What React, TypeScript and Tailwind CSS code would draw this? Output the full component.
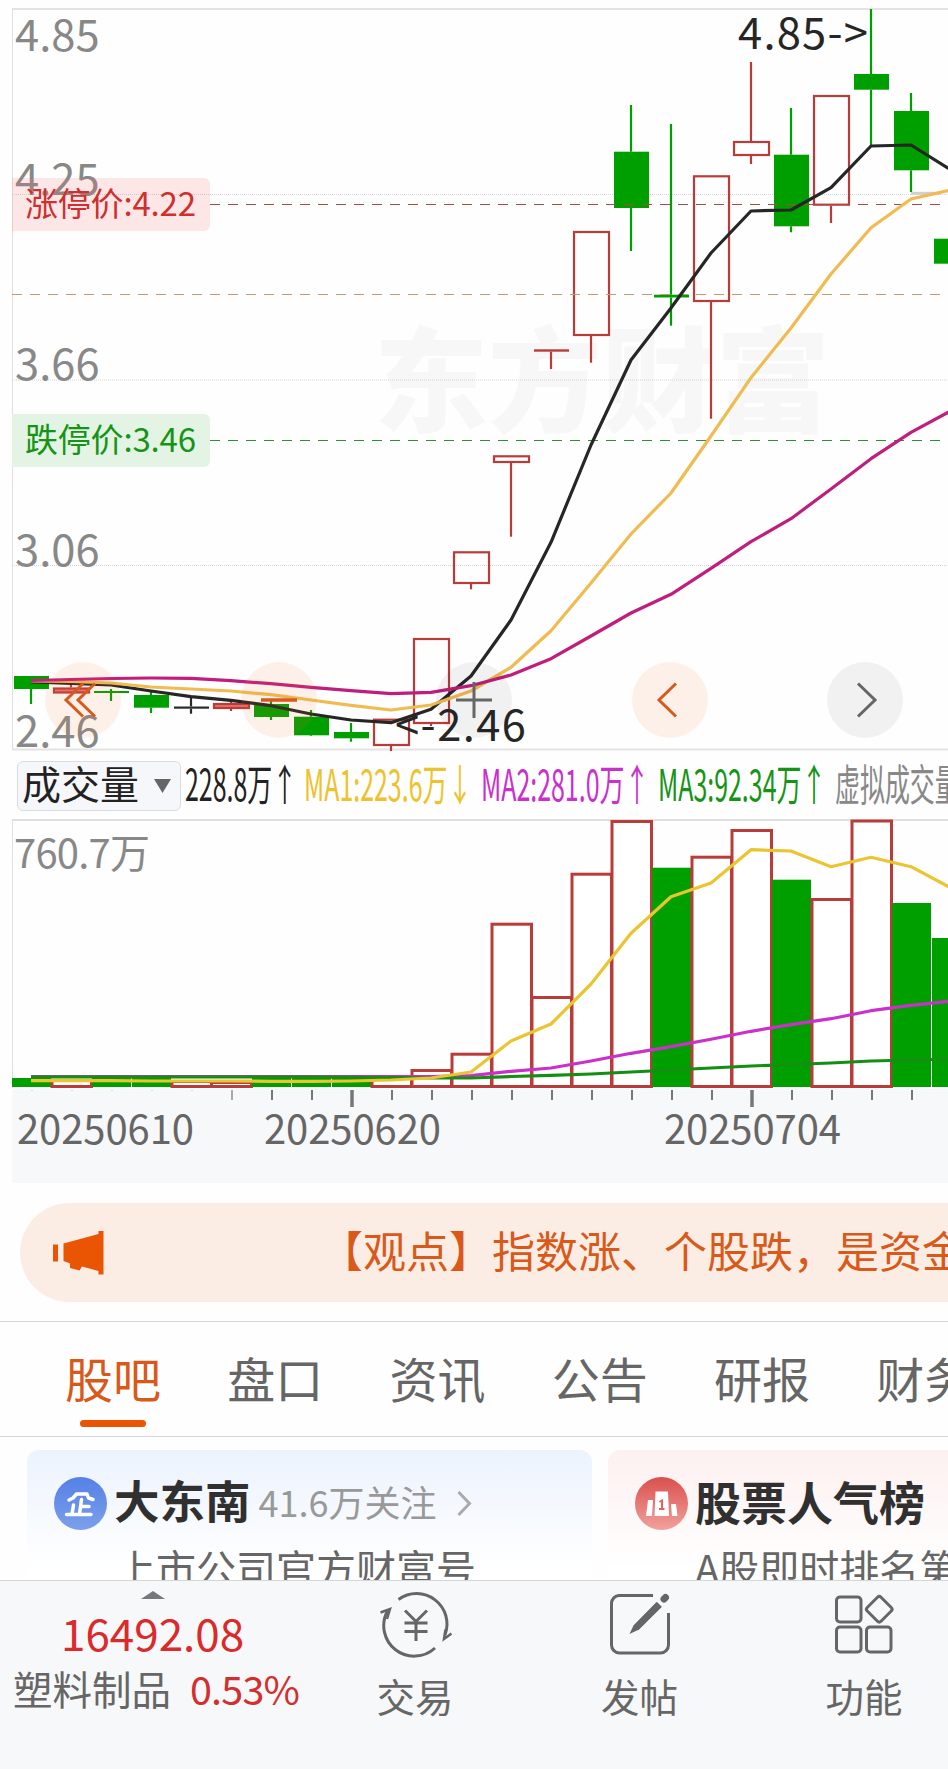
import type { ReactNode } from "react"

const RED = "#b93c3a"
const GREEN = "#009f00"

const STEP = 40

type Candle = {
  kind: "up" | "down" | "flat"
  top: number
  bottom: number
  high?: number
  low?: number
}

const candles: Candle[] = [
  { kind: "down", top: 676, bottom: 689, low: 704 },
  { kind: "up", top: 687.5, bottom: 693.5, high: 684 },
  { kind: "down", top: 691, bottom: 693, high: 689, low: 701 },
  { kind: "down", top: 695, bottom: 707.7, high: 692, low: 713 },
  { kind: "flat", top: 706.5, bottom: 708.7, high: 698, low: 713.7 },
  { kind: "up", top: 703, bottom: 709, high: 700, low: 711 },
  { kind: "down", top: 704, bottom: 717, high: 701, low: 720 },
  { kind: "down", top: 716.7, bottom: 735.3, high: 710, low: 736 },
  { kind: "down", top: 732, bottom: 738.3, high: 723, low: 741.7 },
  { kind: "up", top: 718.7, bottom: 746, low: 751 },
  { kind: "up", top: 638, bottom: 724, low: 726 },
  { kind: "up", top: 551.3, bottom: 584, low: 589.3 },
  { kind: "up", top: 455.3, bottom: 463, low: 536.7 },
  { kind: "up", top: 349.3, bottom: 351.7, low: 369 },
  { kind: "up", top: 231, bottom: 336, low: 362.7 },
  { kind: "down", top: 151.7, bottom: 208, high: 105, low: 251 },
  { kind: "down", top: 294.7, bottom: 297.5, high: 124, low: 325.7 },
  { kind: "up", top: 175.3, bottom: 302, low: 418.7 },
  { kind: "up", top: 141, bottom: 156, high: 62, low: 164 },
  { kind: "down", top: 154.7, bottom: 226.3, high: 108, low: 232.3 },
  { kind: "up", top: 95, bottom: 205.7, low: 223 },
  { kind: "down", top: 74, bottom: 89.7, high: 9, low: 146 },
  { kind: "down", top: 111, bottom: 170.3, high: 93, low: 192 },
  { kind: "down", top: 238.7, bottom: 263.7 },
]

const volumes: { up: boolean; top: number }[] = [
  { up: false, top: 1078 },
  { up: true, top: 1079 },
  { up: false, top: 1077 },
  { up: false, top: 1077 },
  { up: true, top: 1080 },
  { up: true, top: 1081 },
  { up: false, top: 1077 },
  { up: false, top: 1077 },
  { up: false, top: 1077 },
  { up: true, top: 1075 },
  { up: true, top: 1069 },
  { up: true, top: 1052.7 },
  { up: true, top: 922.7 },
  { up: true, top: 996 },
  { up: true, top: 872.7 },
  { up: true, top: 820 },
  { up: false, top: 867.7 },
  { up: true, top: 855.7 },
  { up: true, top: 829 },
  { up: false, top: 879.7 },
  { up: true, top: 898 },
  { up: true, top: 819.5 },
  { up: false, top: 903 },
  { up: false, top: 938 },
]

// One value per candle, in chart units
const priceMA = {
  ma5: [682, 683.5, 685, 691, 696.7, 700.3, 705.7, 714, 720, 722.7, 709.3, 676, 620, 542.3, 445, 360, 308, 253, 211, 210, 187.7, 146, 145, 170],
  ma10: [681, 681.5, 683, 687, 689, 691, 694.7, 700, 705.3, 710, 705, 691, 667.3, 630.7, 583, 534, 493, 436, 377.7, 328, 274, 227.7, 199, 190],
  ma20: [680.5, 679.5, 678.5, 678, 678.3, 680.7, 683.7, 687.3, 690.7, 693.7, 692.3, 685.7, 675, 658.7, 636, 613, 594.3, 568.3, 541.7, 518.7, 489, 458.7, 432.3, 410.7],
}

const volumeMA = {
  ma1: [1080.7, 1080.7, 1080.7, 1081, 1081, 1081, 1081.3, 1081.3, 1081, 1080, 1078, 1072, 1041, 1024, 984, 933.3, 896.7, 883, 849.7, 851, 866.7, 857.3, 866.7, 888],
  ma2: [1076.5, 1076.5, 1076.5, 1076.5, 1076.5, 1076.5, 1076.5, 1076.5, 1076.5, 1076.5, 1076.7, 1075.7, 1071.3, 1068, 1061, 1053.3, 1046.7, 1039.3, 1031.3, 1024.7, 1018.7, 1010.7, 1005.3, 1001],
  ma3: [1077, 1077, 1077, 1077, 1077, 1077, 1077, 1077, 1077.3, 1077.5, 1078, 1078, 1076.5, 1075.3, 1074, 1072, 1070, 1068, 1066, 1064.5, 1063, 1061, 1060, 1059],
}

const toPoints = (values: number[]) =>
  values.map((y, i) => `${31 + i * STEP},${y}`).join(" ")

const CandleShape = ({ candle, index }: { candle: Candle; index: number }) => {
  const { kind, top, bottom, high = top, low = bottom } = candle
  const cx = 31 + index * STEP
  const color = kind === "up" ? RED : kind === "down" ? GREEN : "#2a2a2a"
  const thin = bottom - top < 3

  return (
    <g stroke={color}>
      {high < top && <line x1={cx} x2={cx} y1={high} y2={top} strokeWidth="2.200" />}
      {low > bottom && <line x1={cx} x2={cx} y1={bottom} y2={low} strokeWidth="2.200" />}
      {kind === "up" && !thin ? (
        <rect
          x={14 + index * STEP}
          y={top + 1}
          width="35"
          height={bottom - top - 2}
          fill={bottom - top < 7 ? "#e8706c" : "none"}
          strokeWidth="2.200"
        />
      ) : (
        <rect x={14 + index * STEP} y={top} width="35" height={bottom - top} fill={color} stroke="none" />
      )}
    </g>
  )
}

const priceLabels = [
  { text: "4.85", y: 51 },
  { text: "4.25", y: 194.5 },
  { text: "3.66", y: 379.5 },
  { text: "3.06", y: 565.5 },
  { text: "2.46", y: 747 },
]

const PriceChart = () => (
  <svg width="948" height="753" viewBox="0 0 948 753" className="block">
    <text x="374" y="423" fontSize="114" fontWeight="900" fill="#f7f7f7" textLength="456">
      东方财富
    </text>

    {/* Frame and grid */}
    <line x1="12" x2="948" y1="9" y2="9" stroke="#e3e3e3" strokeWidth="2" />
    <line x1="12.5" x2="12.5" y1="8" y2="750" stroke="#e0e0e0" />
    <line x1="12" x2="948" y1="749.5" y2="749.5" stroke="#e3e3e3" strokeWidth="2" />
    {[194.5, 380, 565.5].map((y) => (
      <line key={y} x1="12" x2="948" y1={y} y2={y} stroke="#d4d4d4" strokeDasharray="1 1" />
    ))}
    <line x1="911" x2="940" y1="193.3" y2="193.3" stroke="#d0d0d0" strokeWidth="3" />

    {priceLabels.map((label) => (
      <text key={label.text} x="15" y={label.y} fontSize="43.5" fill="#888888">
        {label.text}
      </text>
    ))}

    {candles.map((candle, i) => (
      <CandleShape key={i} candle={candle} index={i} />
    ))}

    {/* Limit lines */}
    <line x1="210" x2="948" y1="204.5" y2="204.5" stroke="#a84a4a" strokeDasharray="10 8" />
    <line x1="12" x2="948" y1="294.5" y2="294.5" stroke="#c49a72" strokeDasharray="10 8" />
    <line x1="210" x2="948" y1="440.5" y2="440.5" stroke="#2f8f36" strokeDasharray="10 8" />

    <g fill="none" strokeWidth="3.200" strokeLinejoin="round">
      <polyline points={toPoints(priceMA.ma5)} stroke="#262626" />
      <polyline points={toPoints(priceMA.ma10)} stroke="#f0bb50" />
      <polyline points={toPoints(priceMA.ma20)} stroke="#c01e7c" />
    </g>

    <path d="M12 178h192a6 6 0 0 1 6 6v41a6 6 0 0 1-6 6H12z" fill="#fb6a6a" fillOpacity="0.16" />
    <text x="25" y="216" fontSize="33" fill="#cf2f2f" textLength="171">
      涨停价:4.22
    </text>
    <path d="M12 414h192a6 6 0 0 1 6 6v41a6 6 0 0 1-6 6H12z" fill="#e3f4e4" />
    <text x="25" y="452" fontSize="33" fill="#169416" textLength="171">
      跌停价:3.46
    </text>

    <text x="738" y="49" fontSize="43.5" fill="#262626" textLength="130">
      4.85-&gt;
    </text>
    <text x="395" y="741" fontSize="43.5" fill="#262626" textLength="131">
      &lt;-2.46
    </text>
  </svg>
)

const RoundButton = ({ tone, label, children }: { tone: "orange" | "gray"; label: string; children: ReactNode }) => (
  <button
    aria-label={label}
    className={`size-[76px] rounded-full ${tone === "orange" ? "bg-[#f97a35]/10 text-[#d9591a]" : "bg-black/5 text-[#666666]"}`}
  >
    <svg width="76" height="76" viewBox="0 0 76 76" fill="none" stroke="currentColor" strokeWidth="3">
      {children}
    </svg>
  </button>
)

const ChartControls = () => (
  <div className="absolute top-[662px] left-[45px] flex w-[858px] justify-between">
    <RoundButton tone="orange" label="最左">
      <path d="M38 21.500L21 38l17 16.500M50 21.500L33 38l17 16.500" />
    </RoundButton>
    <RoundButton tone="orange" label="缩小">
      <path d="M20 38h36" strokeWidth="3.500" />
    </RoundButton>
    <RoundButton tone="gray" label="放大">
      <path d="M20 38h36M38 20v36" />
    </RoundButton>
    <RoundButton tone="orange" label="向左">
      <path d="M44 21.500L27 38l17 16.500" />
    </RoundButton>
    <RoundButton tone="gray" label="向右">
      <path d="M31 21.500L48 38 31 54.500" />
    </RoundButton>
  </div>
)

const indicators = [
  { text: "228.8万↑", className: "w-[119px] text-[#222222]" },
  { text: "MA1:223.6万↓", className: "w-[177px] text-[#edc22c]" },
  { text: "MA2:281.0万↑", className: "w-[177px] text-[#c931cc]" },
  { text: "MA3:92.34万↑", className: "w-[177px] text-[#169416]" },
  { text: "虚拟成交量", className: "w-[140px] text-[#888888]" },
]

const VolumeToolbar = () => (
  <div className="flex h-[66px] shrink-0 items-center pl-[17px]">
    <button className="flex h-[50px] w-[164px] shrink-0 items-center justify-between rounded-md border border-[#d9dce0] bg-[#f6f7fa] pr-[9px] pl-[4px] text-[39px] leading-none text-[#222222]">
      <span className="-mt-[7px]">成交量</span>
      <svg width="17" height="14" viewBox="0 0 17 14">
        <path d="M0 0h17L8.500 14z" fill="#666666" />
      </svg>
    </button>
    <div className="-mt-[7px] ml-[4px] flex text-[43px] leading-none whitespace-nowrap">
      {indicators.map((item) => (
        <span key={item.text} className={`shrink-0 ${item.className}`}>
          <span className="inline-block origin-left scale-x-[0.58]">{item.text}</span>
        </span>
      ))}
    </div>
  </div>
)

const VolumeChart = () => (
  <svg width="948" height="364" viewBox="0 819 948 364" className="block shrink-0">
    <rect x="12" y="1089" width="936" height="94" fill="#f7f8fa" />
    <line x1="12" x2="948" y1="820" y2="820" stroke="#e0e0e0" strokeWidth="2" />
    <line x1="12.5" x2="12.5" y1="820" y2="1088" stroke="#e0e0e0" />
    <text x="14" y="868" fontSize="40" fill="#888888" textLength="136">
      760.7万
    </text>

    {volumes.map((bar, i) =>
      bar.up ? (
        <rect
          key={i}
          x={12 + i * STEP}
          y={bar.top + 1.5}
          width="39.500"
          height={1086 - bar.top - 1}
          fill="white"
          stroke={RED}
          strokeWidth="3"
        />
      ) : (
        <rect key={i} x={12 + i * STEP} y={bar.top} width="39" height={1087 - bar.top} fill={GREEN} />
      )
    )}

    <g fill="none" strokeWidth="3.200" strokeLinejoin="round">
      <polyline points={toPoints(volumeMA.ma2)} stroke="#c931c9" />
      <polyline points={toPoints(volumeMA.ma3)} stroke="#148f14" />
      <polyline points={toPoints(volumeMA.ma1)} stroke="#eac52f" />
    </g>

    {/* Axis ticks */}
    {volumes.map((_, i) => {
      const major = i === 8 || i === 18
      return (
        <line
          key={i}
          x1={32 + i * STEP}
          x2={32 + i * STEP}
          y1="1090"
          y2={i < 5 ? 1091 : major ? 1107 : 1100}
          stroke={i < 5 ? "#dddddd" : i === 5 ? "#aaaaaa" : "#777777"}
          strokeWidth={major ? 3.5 : 2}
        />
      )
    })}
    <g fontSize="40" fill="#666666">
      <text x="17" y="1144" textLength="177">20250610</text>
      <text x="264" y="1144" textLength="177">20250620</text>
      <text x="664" y="1144" textLength="177">20250704</text>
    </g>
  </svg>
)

const NoticeBanner = () => (
  <div className="mt-[20px] ml-[20px] flex h-[99px] shrink-0 items-center rounded-l-full bg-[#fcede4] pl-[33px]">
    <svg width="51" height="44" viewBox="0 0 51 44" fill="#ea5504" className="shrink-0">
      <path d="M0 13.500h5v17H0zM10.500 12.500L45.500 3V0H50.500v43.500H45.500V40L29 35.500l-2.500 4L17 37v-4.500l-6.500-2.500z" />
    </svg>
    <p className="-mt-[7px] ml-[216px] text-[43px] leading-none whitespace-nowrap text-[#d9591a]">
      【观点】指数涨、个股跌，是资金
    </p>
  </div>
)

const tabs = ["股吧", "盘口", "资讯", "公告", "研报", "财务"]

const Tabs = () => (
  <nav className="mt-[19px] flex h-[116px] shrink-0 gap-[66.250px] border-y border-[#d6d6d6] pl-[65px]">
    {tabs.map((tab, i) => (
      <button
        key={tab}
        className={`flex w-[96px] shrink-0 flex-col items-center pt-[31px] text-[48px] leading-none ${i === 0 ? "text-[#d9591a]" : "text-[#666666]"}`}
      >
        {tab}
        {i === 0 && <span className="mt-[19px] h-[7px] w-[66px] rounded-full bg-[#ea5504]" />}
      </button>
    ))}
  </nav>
)

const Cards = () => (
  <div className="flex min-h-0 grow basis-0 gap-[16px] overflow-hidden pt-[13px] pl-[27px] whitespace-nowrap">
    <section className="h-[160px] w-[565px] shrink-0 rounded-t-xl bg-linear-to-b from-[#ecf3fd] to-white to-75% pt-[27px] pl-[27px]">
      <div className="flex h-[53px] items-center">
        <svg width="53" height="53" viewBox="0 0 53 53">
          <defs>
            <linearGradient id="blue" x1="0" y1="0" x2="0" y2="1">
              <stop offset="0" stopColor="#5580e6" />
              <stop offset="1" stopColor="#7ba0ea" />
            </linearGradient>
          </defs>
          <circle cx="26.500" cy="26.500" r="26.500" fill="url(#blue)" />
          <g fill="none" stroke="white" strokeWidth="3.500" strokeLinecap="round" strokeLinejoin="round">
            <path d="M15 23l4-2 3.500-4h10.500l1.500 4 4.500 1.500" />
            <path d="M27.500 22.500L25.500 37M26.500 29.500h8.500M19.500 28l-1.500 9M12.500 37.500H37" />
          </g>
        </svg>
        <h2 className="-mt-[7px] ml-[7px] text-[45.500px] leading-none font-bold text-[#303030]">大东南</h2>
        <span className="-mt-[5px] ml-[8px] text-[36px] leading-none text-[#999999]">41.6万关注</span>
        <svg width="15" height="27" viewBox="0 0 15 27" className="ml-[21px]" fill="none" stroke="#aaaaaa" strokeWidth="3">
          <path d="M1.500 2l11 11.500L1.500 25" />
        </svg>
      </div>
      <p className="mt-[17px] ml-[62px] text-[40px] leading-none text-[#666666]">上市公司官方财富号</p>
    </section>
    <section className="h-[160px] w-[400px] shrink-0 rounded-tl-xl bg-linear-to-b from-[#fdf0f0] to-white to-75% pt-[27px] pl-[27px]">
      <div className="flex h-[53px] items-center">
        <svg width="53" height="53" viewBox="0 0 53 53">
          <defs>
            <linearGradient id="red" x1="0" y1="0" x2="0" y2="1">
              <stop offset="0" stopColor="#d9504d" />
              <stop offset="1" stopColor="#f2a19d" />
            </linearGradient>
          </defs>
          <circle cx="26.500" cy="26.500" r="26.500" fill="url(#red)" />
          <path d="M13 23h5l-1 16h-6zM20.500 14.500h12.500l1 24.500H19.500zM36 27h5l1.500 12H37z" fill="white" />
          <path d="M24.500 25l2.500-1.500V32M24 32h5.500" fill="none" stroke="#e06460" strokeWidth="2" />
        </svg>
        <h2 className="-mt-[7px] ml-[7px] text-[46px] leading-none font-bold text-[#303030]">股票人气榜</h2>
      </div>
      <p className="mt-[17px] ml-[60px] text-[40px] leading-none text-[#666666]">A股即时排名第</p>
    </section>
  </div>
)

const NavItem = ({ label, children }: { label: string; children: ReactNode }) => (
  <button className="flex w-[80px] flex-col items-center text-[38.500px] leading-none text-[#666666]">
    <svg width="74" height="68" viewBox="0 0 74 68" fill="none" stroke="currentColor" strokeWidth="3">
      {children}
    </svg>
    <span className="mt-[18px]">{label}</span>
  </button>
)

const BottomBar = () => (
  <footer className="flex h-[189px] shrink-0 border-t border-[#d4d6da] bg-[#f7f8fa] whitespace-nowrap">
    <div className="w-[310px] shrink-0 pt-[10px]">
      <svg width="24" height="8" viewBox="0 0 24 8" className="ml-[141px] block">
        <path d="M0 8L12 0l12 8z" fill="#77787c" />
      </svg>
      <div className="mt-[11px] ml-[61px] text-[44px] leading-none text-[#d92b2b]">16492.08</div>
      <div className="mt-[14px] ml-[13px] flex items-center text-[39.500px] leading-none">
        <span className="text-[#666666]">塑料制品</span>
        <span className="ml-[19px] tracking-[-0.8px] text-[#d42f2f]">0.53%</span>
      </div>
    </div>
    <div className="ml-[65px] flex w-[529px] justify-between pt-[9px]">
      <NavItem label="交易">
        <path d="M20.500 9.500A30.500 30.500 0 0 1 67 45" />
        <path d="M9.500 21A30.500 30.500 0 0 0 57 58" />
        <path d="M2.500 22.500l9.500-3.500-3 10M73.500 43.500L66 49l1.500-9.500" strokeWidth="2.500" />
        <path d="M27 20.500l11 11 11-11M38 32.500V51M26.500 33h23M26.500 41.500h23" />
      </NavItem>
      <NavItem label="发帖">
        <path d="M50 5.500H16A8 8 0 0 0 8.500 13v42a8 8 0 0 0 8 8h41a8 8 0 0 0 8-8V23" />
        <path d="M61 9l1.500-1.500" strokeWidth="7" strokeLinecap="round" />
        <path d="M53.500 12l5 5L35 40l-8.500 4 4-8.500z" fill="currentColor" stroke="none" />
        <path d="M56.500 14.500L33 38" strokeWidth="6.500" />
      </NavItem>
      <NavItem label="功能">
        <rect x="9.500" y="7" width="24.500" height="25" rx="3.500" />
        <rect x="9.500" y="37" width="24.500" height="25" rx="3.500" />
        <rect x="39.500" y="37" width="24.500" height="25" rx="3.500" />
        <rect x="42.500" y="9.500" width="19.500" height="19.500" rx="2.500" transform="rotate(45 52.250 19.250)" />
      </NavItem>
    </div>
  </footer>
)

const App = () => {
  return (
    <main className="flex h-[1769px] w-[948px] flex-col overflow-hidden bg-[#fefefe] font-['Noto_Sans_CJK_SC',sans-serif]">
      <div className="relative shrink-0">
        <PriceChart />
        <ChartControls />
      </div>
      <VolumeToolbar />
      <VolumeChart />
      <NoticeBanner />
      <Tabs />
      <Cards />
      <BottomBar />
    </main>
  )
}

export default App
